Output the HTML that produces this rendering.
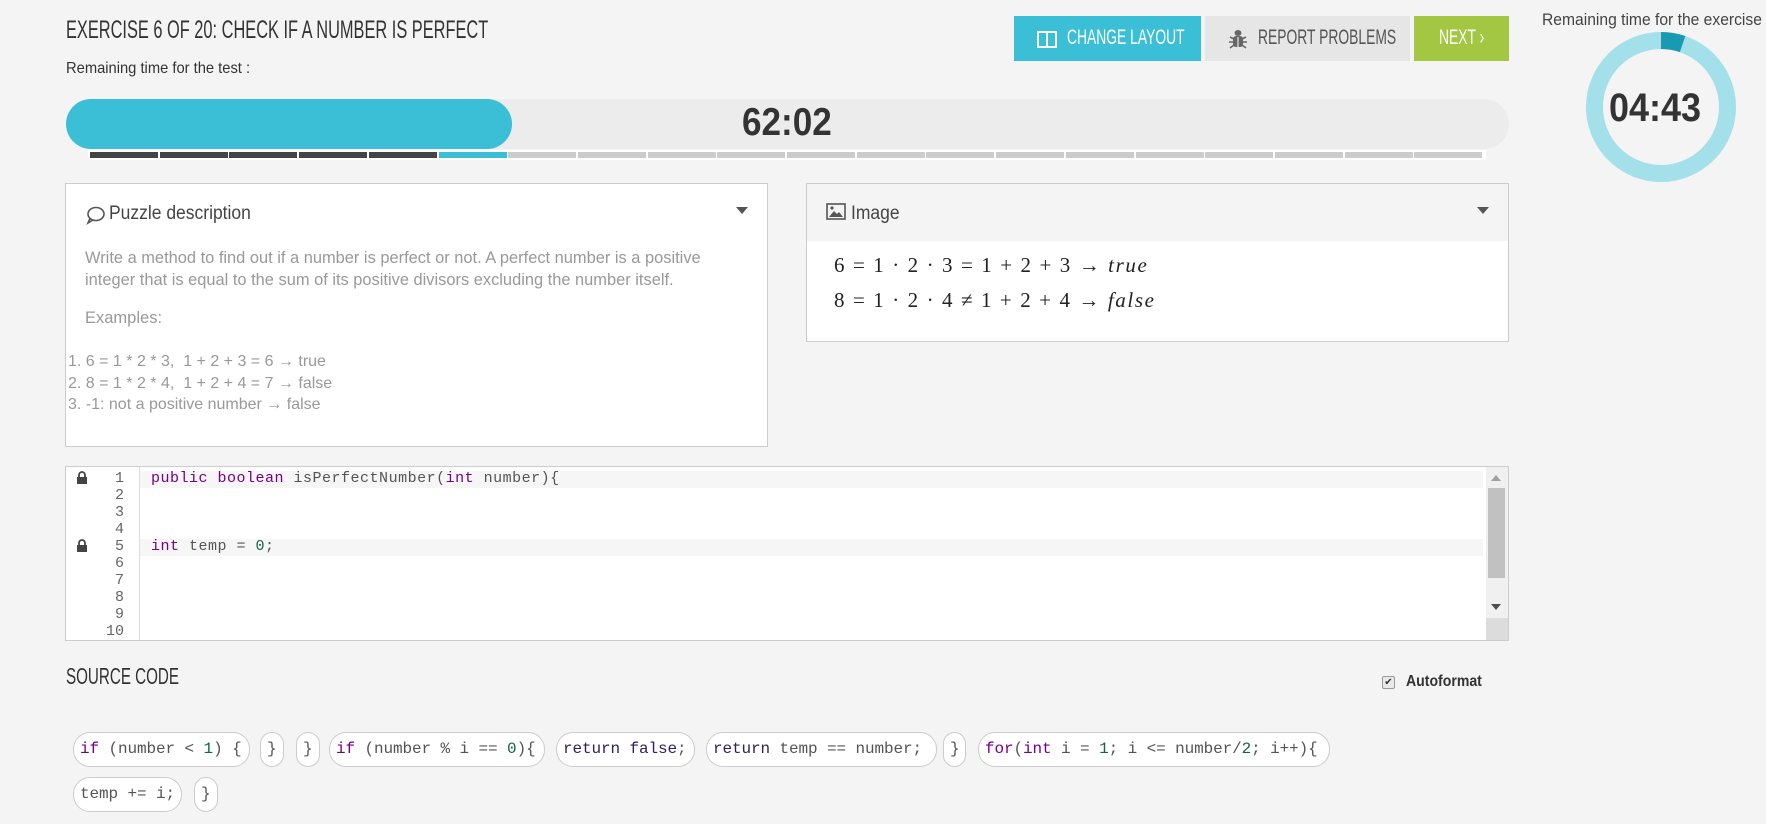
<!DOCTYPE html>
<html><head><meta charset="utf-8"><style>
*{margin:0;padding:0;box-sizing:border-box}
body{width:1766px;height:824px;background:#f4f4f4;font-family:"Liberation Sans",sans-serif;position:relative;overflow:hidden;color:#333}
.a{position:absolute;white-space:nowrap}
.c{display:inline-block;transform-origin:left center}
.seg{position:absolute;top:152px;height:6px;width:68px}
.btn{position:absolute;top:16px;height:45px}
.panel{position:absolute;background:#fff;border:1px solid #ccc}
.mono{font-family:"Liberation Mono",monospace}
.chip{position:absolute;height:35px;border:1px solid #ccc;border-radius:17px;background:#fff;font-family:"Liberation Mono",monospace;font-size:16px;color:#555;line-height:33px;padding-left:6px;white-space:nowrap;letter-spacing:-0.1px}
.kw{color:#770088}.rt{color:#30205e}.nm{color:#116644}
.ln{position:absolute;left:92px;width:32px;text-align:right;font-family:"Liberation Mono",monospace;font-size:15px;color:#666}
</style></head><body>
<div class="a" style="left:66px;top:16px;font-size:25px;color:#333"><span class="c" style="transform:scaleX(0.655)">EXERCISE 6 OF 20: CHECK IF A NUMBER IS PERFECT</span></div>
<div class="a" style="left:66px;top:60px;font-size:16px;color:#333"><span class="c" style="transform:scaleX(0.92)">Remaining time for the test :</span></div>

<div class="a" style="left:66px;top:99px;width:1443px;height:50px;border-radius:25px;background:#ececec"></div>
<div class="a" style="left:66px;top:99px;width:446px;height:50px;border-radius:25px;background:#3bbfd6"></div>
<div class="a" style="left:742px;top:101px;font-size:39px;font-weight:bold;color:#333"><span class="c" style="transform:scaleX(0.9)">62:02</span></div>
<div class="a" style="left:88px;top:150px;width:1398px;height:10px;background:#fff"></div>
<div id="segs"></div>
<script>
var h='';for(var i=0;i<20;i++){var c=i<5?'#444':(i==5?'#3bbfd6':'#ccc');h+='<div class="seg" style="left:'+(90+i*69.7).toFixed(1)+'px;background:'+c+'"></div>';}document.getElementById('segs').innerHTML=h;
</script>

<div class="btn" style="left:1014px;width:187px;background:#3bbfd6"></div>
<svg class="a" style="left:1037px;top:31px" width="20" height="17"><rect x="1" y="1" width="18" height="15" fill="none" stroke="#fff" stroke-width="2"/><line x1="10" y1="1" x2="10" y2="16" stroke="#fff" stroke-width="2"/></svg>
<div class="a" style="left:1067px;top:26px;font-size:21px;color:#fff"><span class="c" style="transform:scaleX(0.66)">CHANGE LAYOUT</span></div>
<div class="btn" style="left:1205px;width:205px;background:#e6e6e6"></div>
<svg class="a" style="left:1229px;top:29px" width="18" height="20" viewBox="0 0 18 20"><ellipse cx="9" cy="4" rx="3.5" ry="3" fill="#666"/><rect x="4" y="7" width="10" height="11" rx="3" fill="#666"/><path d="M1 8l4 2M17 8l-4 2M0 13h4M18 13h-4M1 19l4-3M17 19l-4-3" stroke="#666" stroke-width="1.6"/><line x1="9" y1="8" x2="9" y2="18" stroke="#e6e6e6" stroke-width="1.2"/></svg>
<div class="a" style="left:1258px;top:26px;font-size:21px;color:#555"><span class="c" style="transform:scaleX(0.66)">REPORT PROBLEMS</span></div>
<div class="btn" style="left:1414px;width:95px;background:#a3c643"></div>
<div class="a" style="left:1439px;top:26px;font-size:21px;color:#fff"><span class="c" style="transform:scaleX(0.66)">NEXT ›</span></div>

<div class="a" style="left:1542px;top:10px;font-size:17px;color:#444"><span class="c" style="transform:scaleX(0.92)">Remaining time for the exercise</span></div>
<svg class="a" style="left:1586px;top:32px" width="150" height="150"><circle cx="75" cy="75" r="66.5" fill="none" stroke="#a4e0ea" stroke-width="17"/><circle cx="75" cy="75" r="66.5" fill="none" stroke="#1a9ab2" stroke-width="17" stroke-dasharray="22 500" transform="rotate(-90 75 75)"/></svg>
<div class="a" style="left:1609px;top:86px;font-size:40px;font-weight:bold;color:#333"><span class="c" style="transform:scaleX(0.9)">04:43</span></div>

<div class="panel" style="left:65px;top:183px;width:703px;height:264px"></div>
<svg class="a" style="left:85px;top:205px" width="20" height="20" viewBox="0 0 20 20"><ellipse cx="11" cy="9" rx="8" ry="6.5" fill="none" stroke="#555" stroke-width="1.6"/><path d="M5 13.5L3 18l5-3" fill="none" stroke="#555" stroke-width="1.6"/></svg>
<div class="a" style="left:109px;top:203px;font-size:19px;color:#444"><span class="c" style="transform:scaleX(0.92)">Puzzle description</span></div>
<svg class="a" style="left:736px;top:207px" width="12" height="8"><path d="M0 0h12L6 7z" fill="#555"/></svg>
<div class="a" style="left:85px;top:247px;font-size:16.5px;color:#999;line-height:22px"><span class="c" style="transform:scaleX(0.995)">Write a method to find out if a number is perfect or not. A perfect number is a positive<br>integer that is equal to the sum of its positive divisors excluding the number itself.</span></div>
<div class="a" style="left:85px;top:309px;font-size:16.5px;color:#999">Examples:</div>
<div class="a" style="left:68px;top:351px;font-size:16px;color:#999;line-height:21.5px">1. 6 = 1 * 2 * 3,&nbsp; 1 + 2 + 3 = 6 → true<br>2. 8 = 1 * 2 * 4,&nbsp; 1 + 2 + 4 = 7 → false<br>3. -1: not a positive number → false</div>

<div class="panel" style="left:806px;top:183px;width:703px;height:159px"></div>
<div class="a" style="left:807px;top:184px;width:701px;height:57px;background:#f4f4f4"></div>
<svg class="a" style="left:826px;top:203px" width="20" height="17"><rect x="1" y="1" width="18" height="15" fill="none" stroke="#555" stroke-width="1.6"/><path d="M3 14l5-6 3 3 2-2 4 5z" fill="#555"/><circle cx="6" cy="5" r="1.6" fill="#555"/></svg>
<div class="a" style="left:851px;top:203px;font-size:19px;color:#444"><span class="c" style="transform:scaleX(0.92)">Image</span></div>
<svg class="a" style="left:1477px;top:207px" width="12" height="8"><path d="M0 0h12L6 7z" fill="#555"/></svg>
<div class="a" style="left:834px;top:248px;font-family:'Liberation Serif',serif;font-size:21px;color:#222;line-height:35px;letter-spacing:1.6px">6 = 1 · 2 · 3 = 1 + 2 + 3 → <i>true</i><br>8 = 1 · 2 · 4 ≠ 1 + 2 + 4 → <i>false</i></div>

<div class="panel" style="left:65px;top:466px;width:1444px;height:175px"></div>
<div class="a" style="left:139px;top:467px;width:1px;height:173px;background:#ddd"></div>
<div class="a" style="left:140px;top:471px;width:1343px;height:17px;background:#f6f6f6"></div>
<div class="a" style="left:140px;top:539px;width:1343px;height:17px;background:#f6f6f6"></div>
<svg class="a" style="left:76px;top:471px" width="12" height="14"><path d="M3 6V4a3 3 0 016 0v2" fill="none" stroke="#444" stroke-width="1.8"/><rect x="1" y="6" width="10" height="7" fill="#444"/></svg>
<svg class="a" style="left:76px;top:539px" width="12" height="14"><path d="M3 6V4a3 3 0 016 0v2" fill="none" stroke="#444" stroke-width="1.8"/><rect x="1" y="6" width="10" height="7" fill="#444"/></svg>
<div class="ln" style="top:470px;line-height:17px">1<br>2<br>3<br>4<br>5<br>6<br>7<br>8<br>9<br>10</div>
<div class="a mono" style="left:151px;top:470px;font-size:15px;line-height:17px;color:#555;letter-spacing:0.5px"><span class="kw">public</span> <span class="kw">boolean</span> isPerfectNumber(<span class="kw">int</span> number){</div>
<div class="a mono" style="left:151px;top:538px;font-size:15px;line-height:17px;color:#555;letter-spacing:0.5px"><span class="kw">int</span> temp = <span class="nm">0</span>;</div>
<div class="a" style="left:1486px;top:467px;width:22px;height:173px;background:#f0f0f0"></div>
<div class="a" style="left:1488px;top:488px;width:17px;height:90px;background:#c1c1c1"></div>
<svg class="a" style="left:1491px;top:475px" width="10" height="6"><path d="M0 6h10L5 0z" fill="#a0a0a0"/></svg>
<svg class="a" style="left:1491px;top:604px" width="10" height="6"><path d="M0 0h10L5 6z" fill="#505050"/></svg>
<div class="a" style="left:1486px;top:618px;width:22px;height:22px;background:#dcdcdc"></div>

<div class="a" style="left:66px;top:663px;font-size:23px;color:#333"><span class="c" style="transform:scaleX(0.66)">SOURCE CODE</span></div>
<div class="a" style="left:1382px;top:676px;width:13px;height:13px;border:1px solid #999;border-radius:2px;background:#e9e9e9;font-size:10px;line-height:11px;text-align:center;color:#333">✔</div>
<div class="a" style="left:1406px;top:673px;font-size:16px;font-weight:bold;color:#333"><span class="c" style="transform:scaleX(0.88)">Autoformat</span></div>

<div class="chip" style="left:73px;top:732px;width:177px"><span class="kw">if</span> (number &lt; <span class="nm">1</span>) {</div>
<div class="chip" style="left:260px;top:732px;width:24px">}</div>
<div class="chip" style="left:296px;top:732px;width:24px">}</div>
<div class="chip" style="left:329px;top:732px;width:216px"><span class="kw">if</span> (number % i == <span class="nm">0</span>){</div>
<div class="chip" style="left:556px;top:732px;width:139px"><span class="rt">return</span> <span class="rt">false</span>;</div>
<div class="chip" style="left:706px;top:732px;width:231px"><span class="rt">return</span> temp == number;</div>
<div class="chip" style="left:943px;top:732px;width:23px">}</div>
<div class="chip" style="left:978px;top:732px;width:352px"><span class="kw">for</span>(<span class="kw">int</span> i = <span class="nm">1</span>; i &lt;= number/<span class="nm">2</span>; i++){</div>
<div class="chip" style="left:73px;top:777px;width:109px">temp += i;</div>
<div class="chip" style="left:194px;top:777px;width:24px">}</div>
</body></html>
